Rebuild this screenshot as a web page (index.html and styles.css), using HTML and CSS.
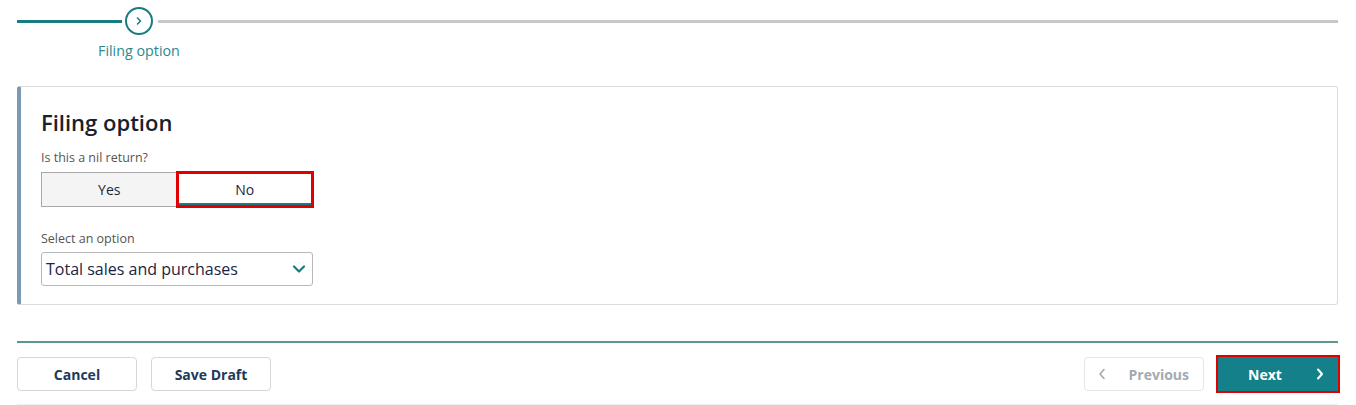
FILE: index.html
```html
<!DOCTYPE html>
<html lang="en">
<head>
  <meta charset="UTF-8" />
  <title>Filing option</title>
  <link rel="stylesheet" href="styles.css">
</head>
<body>
  <div id="page">
    <div class="stepper">
      <div class="line done"></div>
      <div class="step-circle">
        <svg width="10" height="10" viewBox="0 0 10 10"><path d="M3.5 2 L6.5 5 L3.5 8" fill="none" stroke="#1a7c80" stroke-width="1.6" stroke-linecap="round" stroke-linejoin="round"/></svg>
      </div>
      <div class="line todo"></div>
    </div>
    <div class="step-label">Filing option</div>

    <div class="card">
      <h1>Filing option</h1>
      <div class="field-label">Is this a nil return?</div>
      <div class="toggle">
        <button class="toggle-btn">Yes</button>
        <button class="toggle-btn selected">No</button>
      </div>

      <div class="field-label select-label">Select an option</div>
      <div class="select">
        <span>Total sales and purchases</span>
        <svg width="14" height="10" viewBox="0 0 14 10"><path d="M2 2.5 L7 7.5 L12 2.5" fill="none" stroke="#1a7c80" stroke-width="2.2" stroke-linecap="round" stroke-linejoin="round"/></svg>
      </div>
    </div>

    <div class="footer">
      <div class="footer-left">
        <button class="btn">Cancel</button>
        <button class="btn">Save Draft</button>
      </div>
      <div class="footer-right">
        <button class="btn btn-prev">
          <svg width="10" height="12" viewBox="0 0 10 12"><path d="M7 1.5 L3 6 L7 10.5" fill="none" stroke="#a3aab2" stroke-width="1.6" stroke-linecap="round" stroke-linejoin="round"/></svg>
          <span>Previous</span>
        </button>
        <button class="btn btn-next">
          <span>Next</span>
          <svg width="10" height="12" viewBox="0 0 10 12"><path d="M3 1.5 L7 6 L3 10.5" fill="none" stroke="#fff" stroke-width="2" stroke-linecap="round" stroke-linejoin="round"/></svg>
        </button>
      </div>
    </div>
  </div>
</body>
</html>
```

FILE: styles.css
```css
body {
  margin: 0;
  padding: 0;
  background: #fff;
  color: #1b2a3a;
  font-family: 'Open Sans', 'Noto Sans', sans-serif;
}

#page {
  padding: 7px 18px 0 17px;
}

.stepper {
  display: flex;
  align-items: center;
  height: 28px;
}

.line {
  height: 3px;
}

.line.done {
  width: 105px;
  background: #1a7c80;
  margin-right: 3px;
}

.line.todo {
  flex: 1;
  background: #c8c8c8;
  margin-left: 5px;
}

.step-circle {
  width: 24px;
  height: 24px;
  border: 2px solid #1a7c80;
  border-radius: 50%;
  display: flex;
  align-items: center;
  justify-content: center;
  box-sizing: content-box;
}

.step-label {
  margin: 6px 0 0 81px;
  font-size: 14.3px;
  color: #2b8a8e;
  line-height: 20px;
}

.card {
  margin-top: 25px;
  border: 1px solid #dcdcdc;
  border-left: 4px solid #7b98b6;
  border-radius: 3px;
  padding: 19px 20px 18px 20px;
}

h1 {
  margin: 0;
  font-size: 22px;
  font-weight: 600;
  line-height: 33px;
  color: #17212e;
}

.field-label {
  margin-top: 10px;
  font-size: 12.5px;
  color: #555;
  line-height: 18px;
}

.select-label {
  margin-top: 23px;
}

.toggle {
  display: flex;
  width: 272px;
  margin-top: 5px;
  border: 1px solid #a8a8a8;
  box-sizing: border-box;
  height: 35px;
}

.toggle-btn {
  flex: 1;
  border: none;
  background: #f4f4f4;
  font-family: inherit;
  font-size: 14px;
  color: #1b2a3a;
  padding: 0;
  border-right: 1px solid #c8c8c8;
}

.toggle-btn.selected {
  background: #fff;
  border-right: none;
  border-bottom: 3px solid #1a7c80;
  padding-top: 3px;
  outline: 3px solid #e00000;
  outline-offset: -1px;
}

.select {
  display: flex;
  align-items: center;
  justify-content: space-between;
  width: 272px;
  height: 34px;
  box-sizing: border-box;
  margin-top: 4px;
  padding: 0 6px 0 4px;
  border: 1px solid #b8b8b8;
  border-radius: 3px;
  font-size: 16px;
  color: #1b2444;
}

.footer {
  margin-top: 36px;
  border-top: 2px solid #5f958f;
  padding: 14px 0 13px;
  display: flex;
  justify-content: space-between;
  border-bottom: 1px solid #f0f0f0;
}

.footer-left,
.footer-right {
  display: flex;
  gap: 14px;
}

.btn {
  width: 120px;
  height: 34px;
  border: 1px solid #d6d6d6;
  border-radius: 4px;
  background: #fff;
  font-family: inherit;
  font-size: 14px;
  font-weight: 700;
  color: #1d3a5c;
  cursor: pointer;
}

.btn-prev {
  display: flex;
  align-items: center;
  justify-content: space-between;
  padding: 0 14px 0 12px;
  color: #a3aab2;
  border-color: #e6e6e6;
}

.btn-next {
  display: flex;
  align-items: center;
  justify-content: space-between;
  padding: 0 12px 0 29px;
  background: #13808a;
  border-color: #13808a;
  border-radius: 0;
  color: #fff;
  outline: 2px solid #e00000;
  outline-offset: 0;
}
```
